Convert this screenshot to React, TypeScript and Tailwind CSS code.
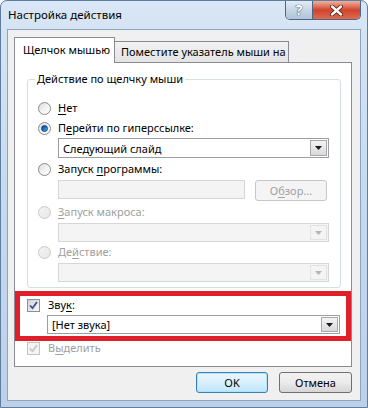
import React from "react";

const font = "font-['Noto_Sans','Open_Sans',sans-serif]";

function Radio({ checked = false, disabled = false }: { checked?: boolean; disabled?: boolean }) {
  return (
    <div
      className={`w-[13px] h-[13px] rounded-full border flex items-center justify-center shrink-0 ${
        disabled
          ? "border-[#c9c9c9] bg-gradient-to-br from-[#f4f4f4] to-[#e6e6e6]"
          : "border-[#8b8b8b] bg-gradient-to-br from-[#dcdcdc] via-[#f2f2f2] to-[#ffffff]"
      }`}
    >
      {checked && (
        <div className="w-[7px] h-[7px] rounded-full bg-gradient-to-br from-[#0a4f9a] via-[#1a72c4] to-[#6cc1f0] border border-[#0d3f7a]" />
      )}
    </div>
  );
}

function Check({ disabled = false }: { disabled?: boolean }) {
  return (
    <div
      className={`w-[13px] h-[13px] border flex items-center justify-center shrink-0 ${
        disabled
          ? "border-[#c4c4c4] bg-[#f4f4f4]"
          : "border-[#8e8f8f] bg-gradient-to-br from-[#cfd3da] to-[#f7f7f7]"
      }`}
    >
      <svg width="9" height="9" viewBox="0 0 9 9">
        <path
          d="M1 4.5 L3.5 7.2 L8 1"
          fill="none"
          stroke={disabled ? "#c7c7c7" : "#3d4f8c"}
          strokeWidth="1.8"
        />
      </svg>
    </div>
  );
}

function Arrow({ disabled = false }: { disabled?: boolean }) {
  return (
    <svg width="7" height="4" viewBox="0 0 7 4">
      <path d="M0 0 H7 L3.5 4 Z" fill={disabled ? "#b4b4b4" : "#1a1a1a"} />
    </svg>
  );
}

function Combo({
  text,
  disabled = false,
  className = "",
}: {
  text?: string;
  disabled?: boolean;
  className?: string;
}) {
  return (
    <div
      className={`flex items-stretch border ${
        disabled ? "border-[#d6d6d6] bg-[#f4f4f4]" : "border-[#9a9fa6] bg-white"
      } ${className}`}
    >
      <div className="flex-1 flex items-center pl-[4px] text-[11px] text-black leading-none whitespace-nowrap">{text}</div>
      <div
        className={`w-[17px] m-[1px] flex items-center justify-center border ${
          disabled
            ? "border-[#e2e2e2] bg-[#f4f4f4]"
            : "border-[#a8a8a8] bg-gradient-to-b from-[#f4f4f4] to-[#d9d9d9]"
        }`}
      >
        <Arrow disabled={disabled} />
      </div>
    </div>
  );
}

function U({ children }: { children: React.ReactNode }) {
  return <span className="underline underline-offset-[2px]">{children}</span>;
}

export default function App() {
  return (
    <div className={`${font} w-[368px] h-[408px] bg-white whitespace-nowrap`}>
      <div className="relative w-[368px] h-[408px] flex flex-col rounded-t-[7px] border border-[#5f7d9f] bg-gradient-to-b from-[#d8e6f5] via-[#c6d9ee] to-[#bcd1e9]">
        {/* title bar */}
        <div className="h-[28px] flex items-center pl-[7px] text-[11.5px] text-black leading-none">
          Настройка действия
        </div>
        {/* caption buttons */}
        <div className="absolute top-0 right-[6px] flex h-[19px] border border-t-0 border-[#4e6583] rounded-b-[5px] overflow-hidden">
          <div className="w-[27px] flex items-center justify-center bg-gradient-to-b from-[#e4ecf5] via-[#c7d5e5] to-[#b0c3d9] border-r border-[#4e6583]">
            <span className="text-[14px] font-bold text-white leading-none [text-shadow:0_0_1px_#2c3e57,0_0_1px_#2c3e57]">?</span>
          </div>
          <div className="w-[47px] flex items-center justify-center bg-gradient-to-b from-[#eeb0a0] via-[#d0432a] to-[#dd6a4f]">
            <svg width="13" height="11" viewBox="0 0 13 11">
              <path d="M2 1.5 L11 9.5 M11 1.5 L2 9.5" stroke="#4d1b12" strokeWidth="4" strokeLinecap="round" />
              <path d="M2 1.5 L11 9.5 M11 1.5 L2 9.5" stroke="#ffffff" strokeWidth="2.4" strokeLinecap="round" />
            </svg>
          </div>
        </div>

        {/* client area */}
        <div className="flex-1 mx-[6px] mb-[6px] border border-[#8da3bf] bg-[#f0f0f0] flex flex-col">
          {/* tabs */}
          <div className="mt-[7px] ml-[6px] flex items-end h-[25px] relative z-10">
            <div className="w-[101px] h-[26px] -mb-[1px] pb-[3px] bg-white border border-b-0 border-[#898c95] flex items-center pl-[8px] text-[11px] leading-none text-black">
              Щелчок мышью
            </div>
            <div className="w-[174px] h-[21px] pb-[1px] bg-gradient-to-b from-[#f2f2f2] to-[#e3e3e3] border border-l-0 border-b-0 border-[#898c95] flex items-center pl-[6px] text-[11px] leading-none text-black">
              Поместите указатель мыши на
            </div>
          </div>
          {/* panel */}
          <div className="ml-[6px] w-[338px] h-[305px] bg-white border border-[#898c95] flex flex-col">
            {/* group box */}
            <div className="relative mt-[16px] ml-[12px] w-[314px] h-[209px] border border-[#d5dfe5] rounded-[3px] flex flex-col pl-[10px] pt-[18px]">
              <div className="absolute -top-[8px] left-[7px] px-[2px] bg-white text-[11px] leading-[14px] text-black">
                Действие по щелчку мыши
              </div>
              <div className="h-[20px] flex items-center gap-[7px] text-[11px] text-black">
                <Radio />
                <span>
                  <U>Н</U>ет
                </span>
              </div>
              <div className="h-[20px] flex items-center gap-[7px] text-[11px] text-black">
                <Radio checked />
                <span>
                  П<U>е</U>рейти по гиперссылке:
                </span>
              </div>
              <Combo text="Следующий слайд" className="ml-[20px] w-[271px] h-[20px]" />
              <div className="mt-[1px] h-[20px] flex items-center gap-[7px] text-[11px] text-black">
                <Radio />
                <span>
                  Запуск <U>п</U>рограммы:
                </span>
              </div>
              <div className="mt-[1px] h-[21px] flex items-start ml-[20px]">
                <div className="w-[187px] h-[19px] border border-[#d6d6d6] bg-[#f4f4f4]" />
                <div className="ml-[10px] w-[72px] h-[21px] border border-[#c6c6c6] rounded-[3px] bg-[#f4f4f4] flex items-center justify-center text-[11px] text-[#a0a0a0] leading-none">
                  О<U>б</U>зор...
                </div>
              </div>
              <div className="mt-[1px] h-[20px] flex items-center gap-[7px] text-[11px] text-[#a0a0a0]">
                <Radio disabled />
                <span>
                  <U>З</U>апуск макроса:
                </span>
              </div>
              <Combo disabled className="mt-[1px] ml-[20px] w-[271px] h-[19px]" />
              <div className="h-[21px] flex items-center gap-[7px] text-[11px] text-[#a0a0a0]">
                <Radio disabled />
                <span>
                  Де<U>й</U>ствие:
                </span>
              </div>
              <Combo disabled className="ml-[20px] w-[271px] h-[19px]" />
            </div>

            {/* highlighted sound box */}
            <div className="mt-[3px] h-[50px] border-[5px] border-[#e01f2b] flex flex-col pt-[3px]">
              <div className="h-[13px] flex items-center gap-[8px] pl-[7px] text-[11px] text-black">
                <Check />
                <span>
                  Зву<U>к</U>:
                </span>
              </div>
              <Combo text="[Нет звука]" className="mt-[3px] ml-[27px] w-[293px] h-[19px]" />
            </div>
            <div className="h-[14px] flex items-center gap-[8px] pl-[12px] text-[11px] text-[#a0a0a0]">
              <Check disabled />
              <span>
                В<U>ы</U>делить
              </span>
            </div>
          </div>

          {/* buttons */}
          <div className="mt-[5px] ml-[6px] w-[338px] flex justify-end gap-[11px]">
            <div className="w-[72px] h-[21px] rounded-[3px] border border-[#3c7fb1] bg-gradient-to-b from-[#eaf6fd] via-[#d9f0fc] to-[#bee6fd] shadow-[inset_0_0_0_1px_#aee3f8] flex items-center justify-center text-[11px] text-black leading-none">
              OK
            </div>
            <div className="w-[73px] h-[21px] rounded-[3px] border border-[#707070] bg-gradient-to-b from-[#f2f2f2] via-[#ebebeb] to-[#d6d6d6] flex items-center justify-center text-[11px] text-black leading-none">
              Отмена
            </div>
          </div>
        </div>
      </div>
    </div>
  );
}
